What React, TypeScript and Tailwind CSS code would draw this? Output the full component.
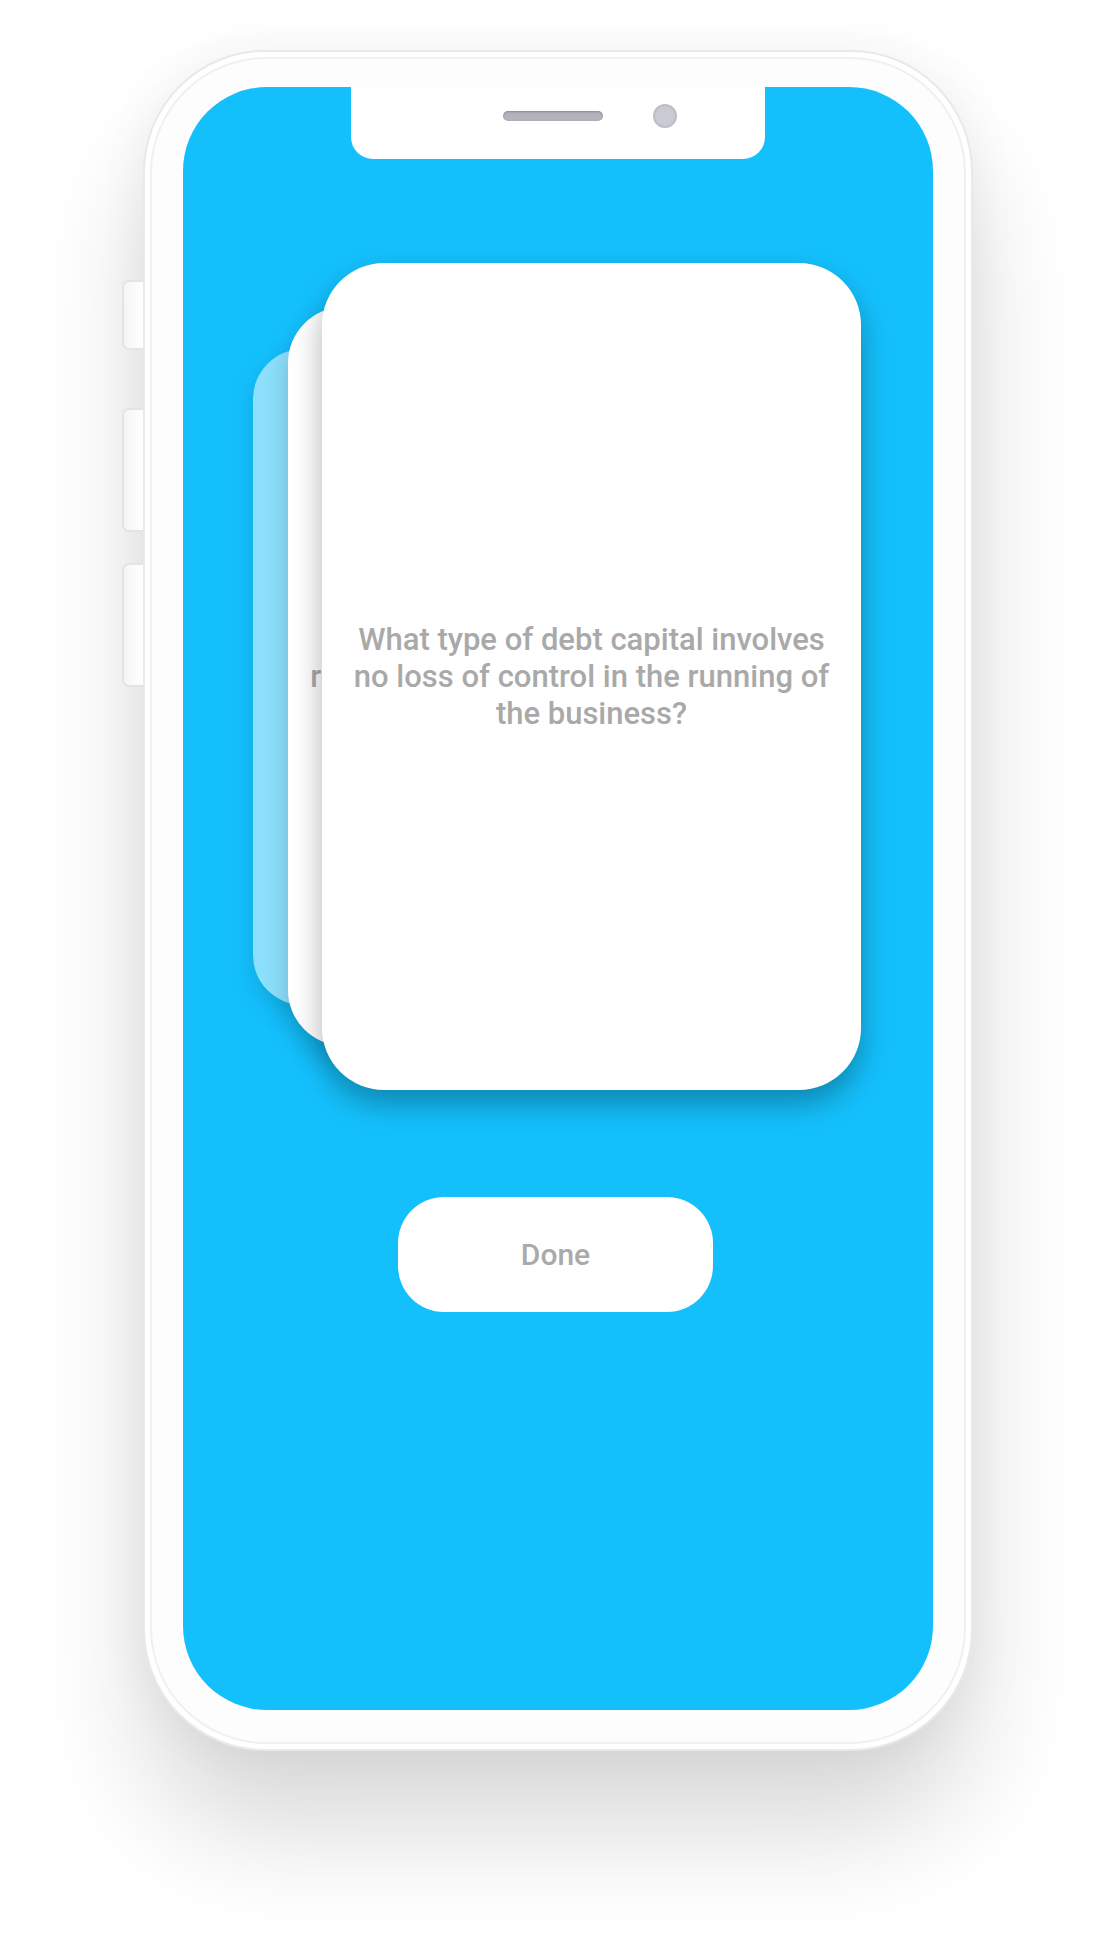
import React from "react";

function SideButton({ className }: { className: string }) {
  return (
    <div
      className={`relative z-10 w-[21px] rounded-l-[7px] border-2 border-r-0 border-[#e4e4e4] bg-gradient-to-r from-[#f5f5f5] to-white ${className}`}
    />
  );
}

function Notch() {
  return (
    <div className="flex h-[72px] w-[414px] shrink-0 items-center self-center rounded-b-[22px] bg-white pb-[31px] pl-[152px] pt-[17px]">
      <div className="h-[10px] w-[100px] rounded-full bg-[#b4b3bd] shadow-[inset_0_1px_2px_rgba(0,0,0,0.25)]" />
      <div className="ml-[50px] h-[24px] w-[24px] rounded-full border-2 border-[#bdbdc5] bg-[#cacad2]" />
    </div>
  );
}

function CardStack() {
  return (
    <div className="ml-[70px] mt-[104px] grid h-[827px] w-[608px] self-start">
      <div className="col-start-1 row-start-1 h-[656px] w-[431px] self-center justify-self-start rounded-[50px] bg-[#8de0fc] shadow-[0_10px_24px_rgba(0,60,90,0.18)]" />
      <div className="col-start-1 row-start-1 ml-[35px] flex h-[739px] w-[485px] items-center self-center justify-self-start overflow-hidden rounded-[56px] bg-white shadow-[0_12px_26px_rgba(0,0,0,0.2)]">
        <p className="w-full pl-[14px] text-center text-[31px] font-medium leading-[37px] text-[#a9a9a9]">
          Which finance will
          <br />
          <span className="whitespace-nowrap">require repayment of the amount</span>
          <br />
          plus interest?
        </p>
      </div>
      <div className="col-start-1 row-start-1 flex h-[827px] w-[539px] items-center justify-center self-center justify-self-end rounded-[62px] bg-white px-[24px] shadow-[0_14px_30px_rgba(0,0,0,0.3)]">
        <p className="text-center text-[31px] font-medium leading-[37px] text-[#a9a9a9]">
          What type of debt capital involves no loss of control in the running of the business?
        </p>
      </div>
    </div>
  );
}

export default function App() {
  return (
    <div className="flex min-h-[1946px] w-full items-start bg-white pl-[122px] pt-[50px] font-['Roboto',sans-serif]">
      <div className="mt-[230px] flex flex-col">
        <SideButton className="h-[70px]" />
        <SideButton className="mt-[58px] h-[124px]" />
        <SideButton className="mt-[31px] h-[124px]" />
      </div>
      <div className="h-[1701px] w-[830px] rounded-[122px] border-2 border-[#e9e9e9] bg-white p-[5px] shadow-[0_80px_110px_rgba(0,0,0,0.15),0_0_50px_rgba(0,0,0,0.05)]">
        <div className="h-full rounded-[116px] border-2 border-[#f0f0f0] bg-[#fdfdfd] px-[31px] pb-[32px] pt-[28px]">
          <div className="flex h-[1623px] w-[750px] flex-col overflow-hidden rounded-[84px] bg-[#14c0fc]">
            <Notch />
            <CardStack />
            <button className="ml-[215px] mt-[107px] flex h-[115px] w-[315px] shrink-0 items-center justify-center rounded-[46px] bg-white text-[30px] font-medium text-[#aaaaaa]">
              Done
            </button>
          </div>
        </div>
      </div>
    </div>
  );
}
